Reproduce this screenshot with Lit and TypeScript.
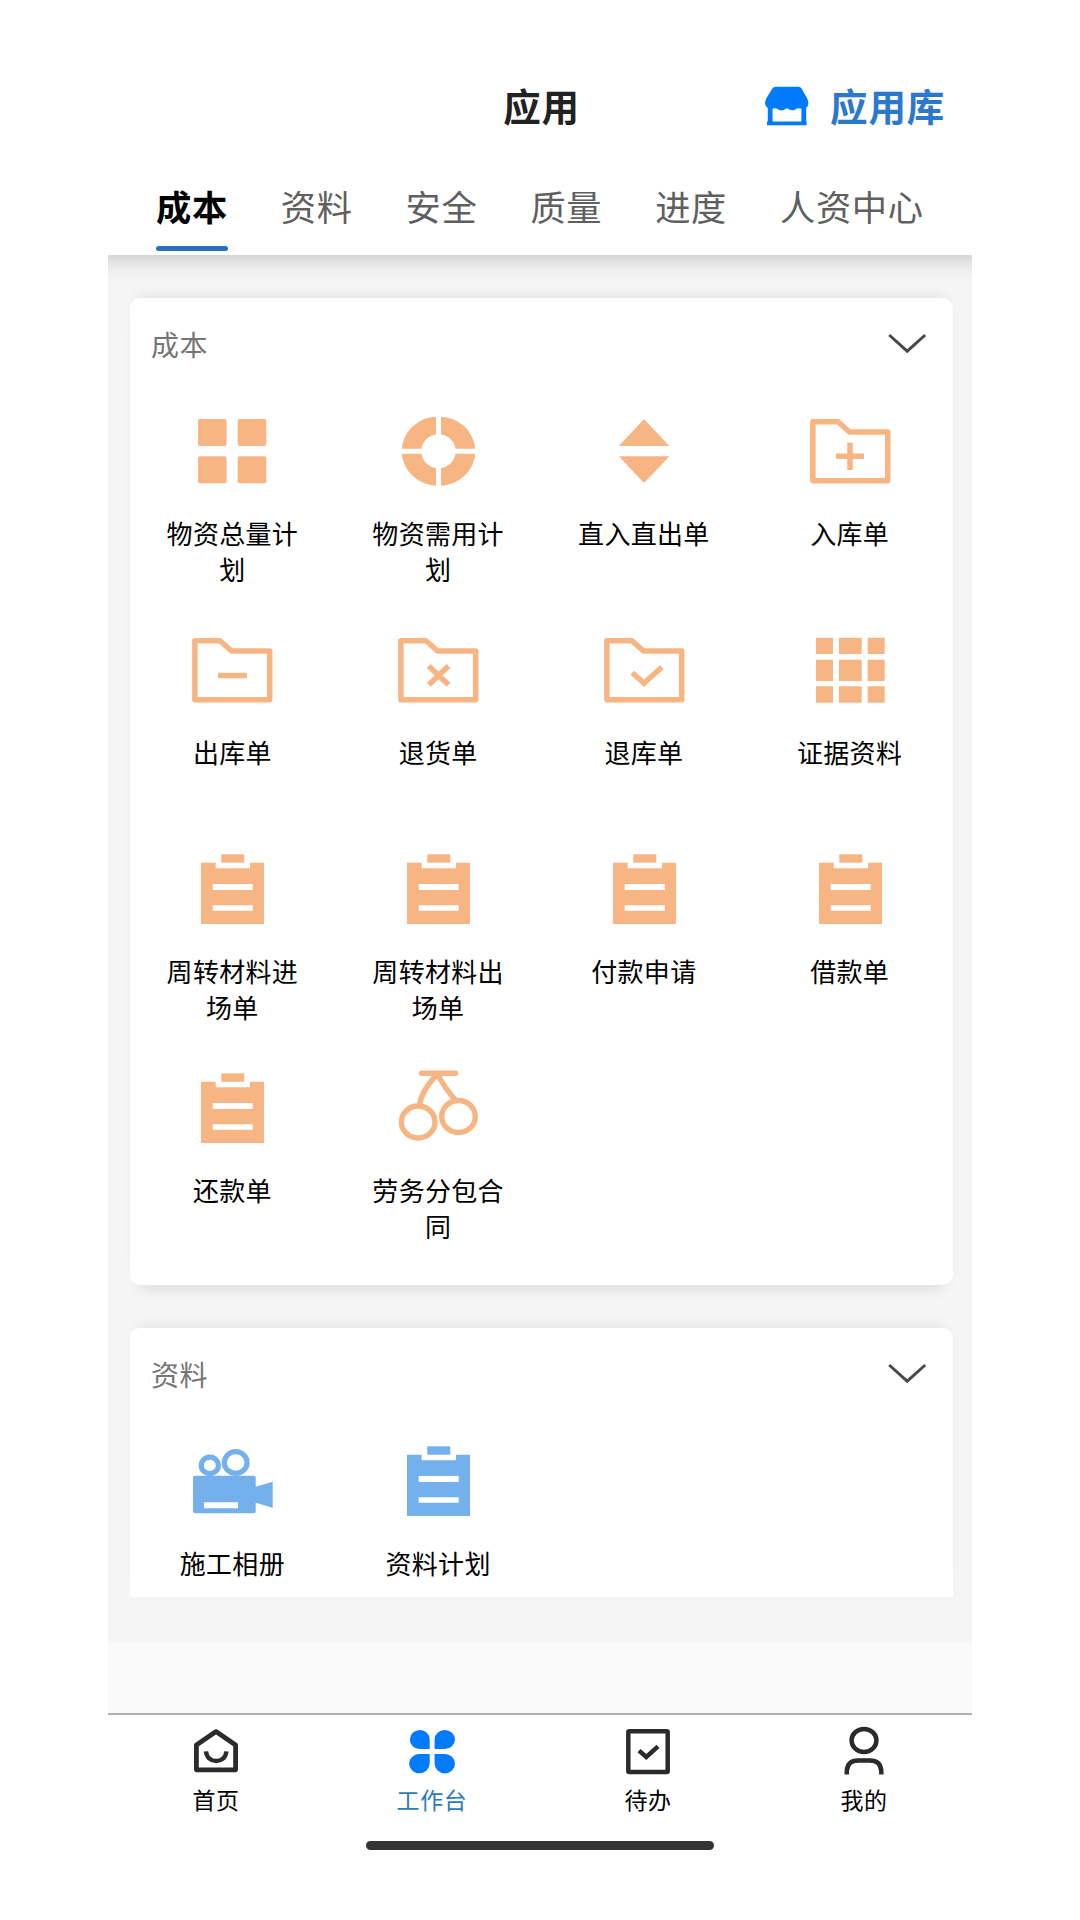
import { LitElement, html, svg, css, TemplateResult, SVGTemplateResult } from "lit";
import { customElement, property, state } from "lit/decorators.js";
import { classMap } from "lit/directives/class-map.js";

const folder = (mark: SVGTemplateResult) => svg`
  <g fill="none" stroke="currentColor" stroke-width="5.5" stroke-linejoin="round">
    <path d="M6.9 10.7H32L43.5 21H81.7V69.7H6.9Z" />
    ${mark}
  </g>`;

const clipboard = svg`
  <path fill="currentColor" fill-rule="evenodd"
    d="M13 13.7H27.7V19.3H62V13.7H76V75H13ZM24.7 35V41H64.7V35ZM24.7 56.3V61.7H64.7V56.3Z" />
  <path fill="currentColor" d="M33.3 5.3H56.3V13.7H33.3Z" />`;

const ICONS: Record<string, SVGTemplateResult> = {
  tiles: svg`<g fill="currentColor">
    <rect x="10" y="8" width="28.6" height="27" rx="2" />
    <rect x="49.7" y="8" width="28.6" height="27" rx="2" />
    <rect x="10" y="45.3" width="28.6" height="27" rx="2" />
    <rect x="49.7" y="45.3" width="28.6" height="27" rx="2" /></g>`,
  ring: svg`
    <path fill="currentColor" fill-rule="evenodd"
      d="M7.7 40.2a36.8 34.8 0 1 0 73.6 0a36.8 34.8 0 1 0 -73.6 0ZM27.3 40.2a17.2 17 0 1 1 34.4 0a17.2 17 0 1 1 -34.4 0Z" />
    <path stroke="#fff" stroke-width="5" fill="none" d="M44.5 4V77M6 40.2H83" />`,
  updown: svg`<path fill="currentColor" d="M44 8.3L69.5 35H18.8ZM18.8 45.3H69.5L44 72Z" />`,
  folderPlus: folder(svg`<path d="M30 45.3H58M44 31.7V59" />`),
  folderMinus: folder(svg`<path d="M30 45.5H59" />`),
  folderCross: folder(svg`<path d="M34.7 36L54.5 54.8M54.5 36L34.7 54.8" />`),
  folderCheck: folder(svg`<path stroke-linejoin="miter" d="M32.3 42.7L44 53.2L62 37" />`),
  cells: svg`<path fill="currentColor"
    d="M10 7.7H27V24H10ZM33 7.7H55.7V24H33ZM61.7 7.7H78.7V24H61.7ZM10 29.7H27V51H10ZM33 29.7H55.7V51H33ZM61.7 29.7H78.7V51H61.7ZM10 56.3H27V72.7H10ZM33 56.3H55.7V72.7H33ZM61.7 56.3H78.7V72.7H61.7Z" />`,
  clipboard,
  cherry: svg`<g fill="none" stroke="currentColor" stroke-width="5.4">
    <path stroke-linecap="round" d="M27.5 5.3H61.5" />
    <path d="M42.5 7Q28 22 25.3 37M44 7Q52 22 61.5 32" />
    <ellipse cx="24.2" cy="54" rx="16.8" ry="16" />
    <ellipse cx="64.5" cy="48.5" rx="16.8" ry="16" /></g>`,
  camera: svg`
    <g fill="none" stroke="currentColor" stroke-width="5.2">
      <ellipse cx="21.8" cy="24.4" rx="8.6" ry="8.2" />
      <ellipse cx="47.7" cy="21.5" rx="11.4" ry="10.9" />
    </g>
    <path fill="currentColor" fill-rule="evenodd"
      d="M7 34.7H65.7a2 2 0 0 1 2 2V45.7L84.7 40.7V66.7L67.7 61.7V70.3a2 2 0 0 1-2 2H7a2 2 0 0 1-2-2V36.7a2 2 0 0 1 2-2ZM16 61.3V67.3H50V61.3Z" />`,
};

const NAV_ICONS: Record<string, SVGTemplateResult> = {
  home: svg`<g fill="none" stroke="#2b2b2b" stroke-width="4.8" stroke-linejoin="round">
    <path d="M24 4.6L43.6 18V42.8H4.4V18Z" />
    <path stroke-width="4.4" d="M14 24.3C15 37.3 33.4 37.3 34.4 24.3" /></g>`,
  work: svg`<path fill="#017bfd"
    d="M21.7 22H11.2A9.9 9.5 0 1 1 21.7 12.5ZM26.6 22V12.5A10.2 9.5 0 1 1 36.8 22ZM21.7 27V36.8A10.3 9.6 0 1 1 11.2 27ZM26.6 27H36.8A10.2 9.7 0 1 1 26.6 36.8Z" />`,
  todo: svg`<g fill="none" stroke="#2b2b2b" stroke-width="4.5">
    <rect x="4.3" y="4.3" width="39.4" height="40.6" rx="1" />
    <path d="M15 23.6L22.3 30L34 19.4" /></g>`,
  mine: svg`<g fill="none" stroke="#2b2b2b" stroke-width="4.5">
    <ellipse cx="24" cy="13.4" rx="12.4" ry="11.5" />
    <path d="M6.8 47.4V44Q7.5 33.6 18 33.6H30Q40.5 33.6 41.3 44V47.4" /></g>`,
};

interface Entry {
  icon: string;
  label: string;
}

@customElement("app-section")
class AppSection extends LitElement {
  @property() heading = "";
  @property({ attribute: false }) entries: Entry[] = [];

  static styles = css`
    :host {
      display: block;
      background: #fff;
      box-sizing: border-box;
      border-radius: 10px;
      box-shadow: 0 12px 14px -10px rgba(0, 0, 0, 0.13), 0 -10px 14px -8px rgba(0, 0, 0, 0.08);
    }
    .head {
      display: flex;
      align-items: center;
      justify-content: space-between;
      height: 94px;
      padding: 0 25px 0 21px;
      margin-bottom: 19px;
      box-sizing: border-box;
    }
    .heading {
      margin-bottom: 2px;
      font-size: 28px;
      letter-spacing: 0.6px;
      color: #757575;
    }
    .chevron {
      width: 42px;
      height: 24px;
      margin-bottom: 5px;
    }
    .grid {
      display: grid;
      grid-template-columns: repeat(4, 1fr);
      grid-auto-rows: 219px;
    }
    .entry {
      display: flex;
      flex-direction: column;
      align-items: center;
      gap: 24px;
      padding-right: 1px;
    }
    .icon {
      width: 88px;
      height: 80px;
      flex: none;
    }
    .label {
      width: 136px;
      font-size: 26px;
      letter-spacing: 0.3px;
      line-height: 36px;
      text-align: center;
      color: #000;
    }
  `;

  render() {
    return html`
      <div class="head">
        <span class="heading">${this.heading}</span>
        <svg class="chevron" viewBox="0 0 42 24">
          <path d="M3.2 4L21.2 20.2L39.2 4" fill="none" stroke="#484848" stroke-width="2.9" />
        </svg>
      </div>
      <div class="grid">
        ${this.entries.map(
          (e) => html`<div class="entry">
            <svg class="icon" viewBox="0 0 88 80">${ICONS[e.icon]}</svg>
            <span class="label">${e.label}</span>
          </div>`
        )}
      </div>
    `;
  }
}

@customElement("app-root")
class AppRoot extends LitElement {
  @state() private tab = 0;

  private tabs = ["成本", "资料", "安全", "质量", "进度", "人资中心"];

  private cost: Entry[] = [
    { icon: "tiles", label: "物资总量计划" },
    { icon: "ring", label: "物资需用计划" },
    { icon: "updown", label: "直入直出单" },
    { icon: "folderPlus", label: "入库单" },
    { icon: "folderMinus", label: "出库单" },
    { icon: "folderCross", label: "退货单" },
    { icon: "folderCheck", label: "退库单" },
    { icon: "cells", label: "证据资料" },
    { icon: "clipboard", label: "周转材料进场单" },
    { icon: "clipboard", label: "周转材料出场单" },
    { icon: "clipboard", label: "付款申请" },
    { icon: "clipboard", label: "借款单" },
    { icon: "clipboard", label: "还款单" },
    { icon: "cherry", label: "劳务分包合同" },
  ];

  private docs: Entry[] = [
    { icon: "camera", label: "施工相册" },
    { icon: "clipboard", label: "资料计划" },
  ];

  private nav: Entry[] = [
    { icon: "home", label: "首页" },
    { icon: "work", label: "工作台" },
    { icon: "todo", label: "待办" },
    { icon: "mine", label: "我的" },
  ];

  static styles = css`
    :host {
      display: block;
      background: #fff;
      font-family: "Noto Sans CJK SC", sans-serif;
    }
    .screen {
      display: flex;
      flex-direction: column;
      width: 864px;
      height: 1920px;
      margin: 0 auto;
    }
    .header {
      display: grid;
      grid-template-columns: 1fr auto 1fr;
      align-items: center;
      height: 156px;
      padding: 53px 27px 0 28px;
      box-sizing: border-box;
      font-size: 37.5px;
      font-weight: 700;
      letter-spacing: 0.8px;
      color: #222;
    }
    .title {
      grid-column: 2;
      padding-left: 2px;
    }
    .library {
      display: flex;
      align-items: center;
      justify-content: flex-end;
      gap: 21px;
      color: #2b78cc;
    }
    .store {
      width: 44px;
      height: 40px;
      margin-top: 3px;
    }
    .tabs {
      display: flex;
      gap: 53px;
      height: 99px;
      padding: 0 48px;
      box-sizing: border-box;
    }
    .tab {
      display: flex;
      flex-direction: column;
      justify-content: space-between;
      padding: 26px 0 4px;
      font-size: 35.3px;
      line-height: 48px;
      letter-spacing: 0.6px;
      color: #5f5f5f;
      white-space: nowrap;
      box-sizing: border-box;
    }
    .tab.active {
      color: #000;
      font-weight: 700;
    }
    .tab.active::after {
      content: "";
      height: 5px;
      border-radius: 2.5px;
      background: #2a70c1;
    }
    .content {
      height: 1387px;
      padding: 43px 19px 0 22px;
      box-sizing: border-box;
      background: linear-gradient(#d5d5d5, #e4e4e4 8px, #f0f0f0 16px, #f5f5f5 26px);
      overflow: hidden;
    }
    .cost {
      height: 987px;
      margin-bottom: 43px;
      color: #f7b584;
    }
    .docs {
      height: 269px;
      color: #74b0eb;
      border-radius: 10px 10px 2px 2px;
      box-shadow: 0 -10px 14px -8px rgba(0, 0, 0, 0.08);
    }
    .spacer {
      height: 71px;
      background: #fafafa;
    }
    .nav {
      display: grid;
      grid-template-columns: repeat(4, 1fr);
      height: 128px;
      padding-top: 12px;
      border-top: 2px solid #b0b0b0;
      box-sizing: border-box;
    }
    .nav-item {
      display: flex;
      flex-direction: column;
      align-items: center;
      gap: 8px;
      font-size: 23px;
      line-height: 32px;
      letter-spacing: 0.6px;
      color: #000;
    }
    .nav-item.active {
      color: #2c7bb8;
    }
    .nav-icon {
      width: 48px;
      height: 48px;
      overflow: visible;
    }
    .home-bar {
      width: 348px;
      height: 9px;
      border-radius: 5px;
      background: #333;
      align-self: center;
    }
  `;

  render(): TemplateResult {
    return html`
      <div class="screen">
        <header class="header">
          <span class="title">应用</span>
          <div class="library">
            <svg class="store" viewBox="0 0 44 40">
              <path fill="#017bfd" d="M10.5 0.8H33.5Q35.5 0.8 36.6 2.6L42.2 12.5Q45.5 20 39.5 22.6H35Q32 21.4 29.5 24Q25.5 25 22 22Q18 25.4 14 24Q11.5 21.4 8.5 22.6H4Q-2 20 1.2 12.5L7.4 2.6Q8.5 0.8 10.5 0.8Z" />
              <path fill="none" stroke="#017bfd" stroke-width="4.8" d="M5.2 20V36M38.8 20V36" />
              <path fill="none" stroke="#017bfd" stroke-width="3.8" d="M2 37.4H41.6" />
            </svg>
            <span>应用库</span>
          </div>
        </header>
        <div class="tabs">
          ${this.tabs.map(
            (t, i) => html`<div
              class=${classMap({ tab: true, active: i === this.tab })}
              @click=${() => (this.tab = i)}
            >
              ${t}
            </div>`
          )}
        </div>
        <main class="content">
          <app-section class="cost" heading="成本" .entries=${this.cost}></app-section>
          <app-section class="docs" heading="资料" .entries=${this.docs}></app-section>
        </main>
        <div class="spacer"></div>
        <nav class="nav">
          ${this.nav.map(
            (n) => html`<div class=${classMap({ "nav-item": true, active: n.icon === "work" })}>
              <svg class="nav-icon" viewBox="0 0 48 48">${NAV_ICONS[n.icon]}</svg>
              <span>${n.label}</span>
            </div>`
          )}
        </nav>
        <div class="home-bar"></div>
      </div>
    `;
  }
}
